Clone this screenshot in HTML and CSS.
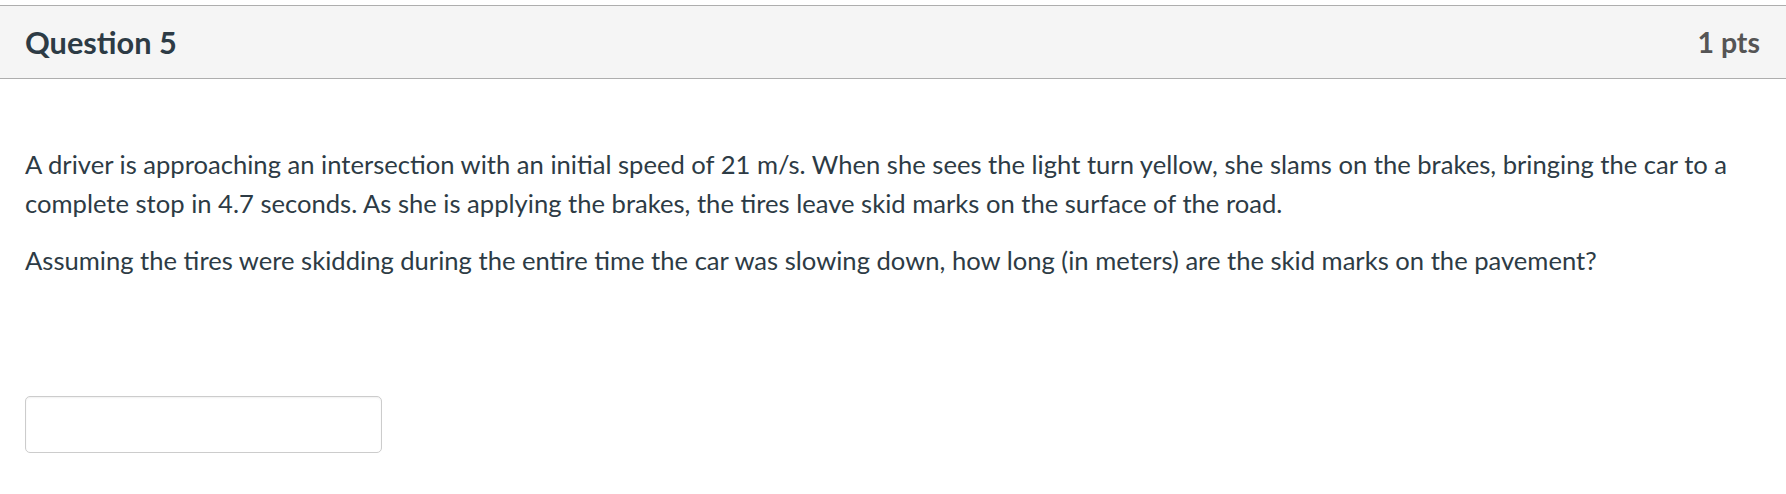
FILE: index.html
```html
<!DOCTYPE html>
<html lang="en">
<head>
<meta charset="utf-8">
<title>Question 5</title>
<link rel="stylesheet" href="styles.css">
</head>
<body>
<div class="question">
  <div class="question-header">
    <span class="question-name">Question 5</span>
    <span class="question-points">1 pts</span>
  </div>
  <div class="question-body">
    <p>A driver is approaching an intersection with an initial speed of 21 m/s. When she sees the light turn yellow, she slams on the brakes, bringing the car to a complete stop in 4.7 seconds. As she is applying the brakes, the tires leave skid marks on the surface of the road.</p>
    <p>Assuming the tires were skidding during the entire time the car was slowing down, how long (in meters) are the skid marks on the pavement?</p>
    <div class="answer">
      <input class="answer-input" type="text" aria-label="Answer">
    </div>
  </div>
</div>
</body>
</html>
```

FILE: styles.css
```css
html, body {
  margin: 0;
  padding: 0;
  background: #ffffff;
}

body {
  font-family: Lato, "Open Sans", "Liberation Sans", sans-serif;
  color: #2d3b45;
}

.question {
  padding-top: 5px;
}

.question-header {
  display: flex;
  align-items: center;
  justify-content: space-between;
  height: 72px;
  padding: 0 26px 0 25px;
  background: #f5f5f5;
  border-top: 1px solid #aeaeae;
  border-bottom: 1px solid #aeaeae;
}

.question-name {
  font-size: 30.7px;
  font-weight: 700;
  color: #2d3b45;
}

.question-points {
  font-size: 28.5px;
  font-weight: 700;
  color: #555555;
}

.question-body {
  padding: 66px 25px 0 25px;
}

.question-body p {
  margin: 0 0 18px 0;
  font-size: 25.6px;
  line-height: 39px;
}

.answer {
  padding-top: 98px;
}

.answer-input {
  display: block;
  box-sizing: border-box;
  width: 357px;
  height: 57px;
  margin: 0;
  padding: 0 12px;
  border: 1px solid #cccccc;
  border-radius: 5px;
  background: #ffffff;
  box-shadow: inset 0 1px 2px rgba(0, 0, 0, 0.06);
  font-family: inherit;
  font-size: 24px;
  color: #2d3b45;
}
```
